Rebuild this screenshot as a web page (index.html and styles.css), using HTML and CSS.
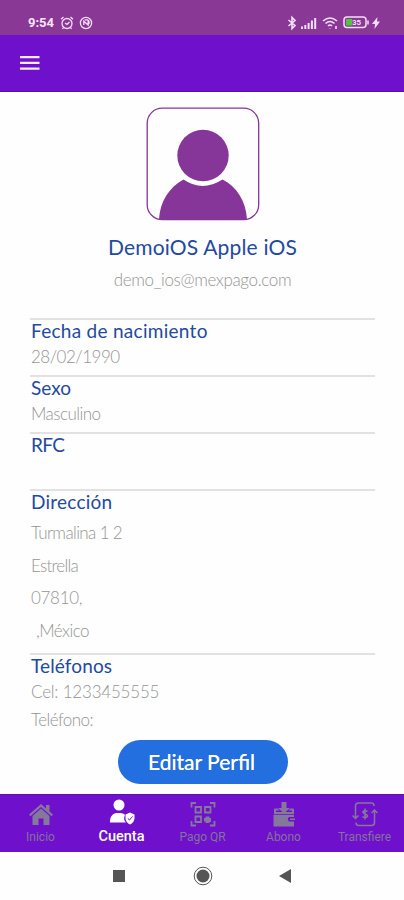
FILE: index.html
```
<!DOCTYPE html>
<html lang="es">
<head>
<meta charset="utf-8">
<title>Cuenta</title>
<link rel="stylesheet" href="styles.css">
</head>
<body>
<div class="phone">
  <header class="status">
    <div class="status-left">
      <span class="clock">9:54</span>
      <svg class="alarm" width="14" height="14" viewBox="0 0 14 14"><circle cx="7" cy="7.5" r="5"/><path d="M1 3.2 3.5 1M13 3.2 10.500 1M3.500 11.500 2.500 13M10.500 11.500 11.500 13M5 7l2 1.500L9.500 6"/></svg>
      <svg class="nfc" width="14" height="14" viewBox="0 0 14 14"><circle cx="7" cy="7" r="5.600"/><path d="M4.800 9V5.200L9.200 9V5M5.500 3.800h3q2 1 1.500 4"/></svg>
    </div>
    <div class="status-right">
      <svg class="line bt" width="10" height="14" viewBox="0 0 10 14"><path d="M1.500 4 8 9.500 5 12.500v-11L8 4.500 1.500 10"/></svg>
      <svg class="fill signal" width="16" height="12" viewBox="0 0 16 12"><path d="M0 9.500h2V12H0zM3.300 8h2v4h-2zM6.600 6h2v6h-2zM9.900 3.500h2V12h-2zM13.200 1h2v11h-2z"/></svg>
      <svg class="line wifi" width="17" height="14" viewBox="0 0 17 14"><path d="M1 5q7-6 14 0M3.500 7.500q4.500-4 9 0M6 10q2-2 4 0M8 12v.5M14 10v3"/></svg>
      <svg class="battery" width="26" height="13" viewBox="0 0 26 13"><rect class="shell" x="1" y="1" width="22" height="10.500" rx="3"/><rect class="charge" x="3" y="3" width="6" height="6.500"/><path class="shell" d="M25 4.500v4"/><text x="9" y="9.300">35</text></svg>
      <svg class="fill" width="8" height="12" viewBox="0 0 8 12"><path d="M5.500 0 0 7h3l-.5 5L8 4.500H5z"/></svg>
    </div>
  </header>
  <div class="appbar">
    <svg width="20" height="14" viewBox="0 0 20 14"><path d="M0 0h19.500v2.300H0zM0 5.700h19.500V8H0zM0 11.400h19.500v2.300H0z"/></svg>
  </div>
  <main>
    <section class="profile">
      <svg class="avatar" width="114" height="114" viewBox="0 0 114 114"><rect x="1.200" y="1.200" width="111.500" height="111.500" rx="15"/><circle cx="57" cy="48.500" r="25.700"/><path d="M13 112.500c1-18 10-32 24.500-40q19 13 39 0C91 80 100 94 101 112.500z"/></svg>
      <h1><span class="t name">DemoiOS Apple iOS</span></h1>
      <p class="mail"><span class="t email">demo_ios@mexpago.com</span></p>
    </section>
    <section class="row"><h2><span class="t h-birth">Fecha de nacimiento</span></h2><p><span class="t v-birth">28/02/1990</span></p></section>
    <section class="row"><h2><span class="t h-sex">Sexo</span></h2><p><span class="t v-sex">Masculino</span></p></section>
    <section class="row"><h2><span class="t h-rfc">RFC</span></h2></section>
    <section class="row address"><h2><span class="t h-dir">Dirección</span></h2><p><span class="t v-street">Turmalina 1 2</span></p><p><span class="t v-area">Estrella</span></p><p><span class="t v-zip">07810,</span></p><p class="country"><span class="t v-country">,México</span></p></section>
    <section class="row phones"><h2><span class="t h-tel">Teléfonos</span></h2><p><span class="t v-cel">Cel: 1233455555</span></p><p><span class="t v-tel">Teléfono:</span></p></section>
    <button class="edit">Editar Perfil</button>
  </main>
  <nav class="tabs">
    <a class="tab"><svg width="26" height="26" viewBox="0 0 26 26"><path class="f" d="M13 3 1 13.500l1.500 1.700L13 6l10.500 9.200 1.500-1.700-3.500-3V4h-3.500v3.500zM4.500 15 13 7.500l8.500 7.500v9H15.500v-6.500h-5V24h-6z"/></svg><span>Inicio</span></a>
    <a class="tab on"><svg width="26" height="26" viewBox="0 0 26 26"><circle class="f" cx="10" cy="6" r="5.500"/><path class="f" d="M1 23.500c0-7 3-9.500 8-9.500 4 0 6 .5 7 2-1.500 3-1 5.500 1 7.500z"/><path class="f" d="m21 13.500 4.500 2v4q-.5 4-4.500 6-4-2-4.500-6v-4z"/><path class="check" d="m18.800 19.500 1.700 1.500 3-3.500"/></svg><span>Cuenta</span></a>
    <a class="tab"><svg width="26" height="26" viewBox="0 0 26 26"><path class="l" d="M6 2H1.500v4.500M20 2h4.500v4.500M1.500 20v4.500H6M24.500 20v4.500H20M5.500 6h5.500v5.500H5.500zM15 6h5.500v5.500H15zM5.500 15.500h5.500V21H5.500z"/><path class="f" d="M15.500 15.500h4v1.500h1.500v4h-1.500v1h-4v-1.500H14v-3.500h1.500z"/></svg><span>Pago QR</span></a>
    <a class="tab"><svg width="26" height="26" viewBox="0 0 26 26"><path class="f" d="M10.500 1h5v6h3.500l-6 5.500L7 7h3.500zM4 7.500h2.500l2 2H5v1.500h16V9.500h-3.500l2-2H22q1 0 1 1V13h-20V8.500q0-1 1-1zM2.500 13.800h20.500V16h-5q-2.500 2 0 4.500h5V25.500H2.500zM19 17.500h5V19h-5z"/></svg><span>Abono</span></a>
    <a class="tab"><svg width="26" height="26" viewBox="0 0 26 26"><path class="l thin" d="M3.500 17V5q0-3 3-3h13q2.500 0 2.500 3M.5 14.500l3 3 3-3M22.500 9.500v12q0 3-3 3h-13q-2.500 0-2.500-3M19.500 12l3-3 3 3M15.500 10.500q-2.500-1.500-4.500 0c-1 3 4.500 2 4.500 4.500-.5 2-3.500 2-5 .5M13 7.500v11"/></svg><span>Transfiere</span></a>
  </nav>
  <footer class="system">
    <svg width="12" height="12" viewBox="0 0 12 12"><path d="M0 0h12v12H0z"/></svg>
    <svg width="20" height="20" viewBox="0 0 20 20"><circle class="ring" cx="10" cy="10" r="8.800"/><circle cx="10" cy="10" r="6.500"/></svg>
    <svg class="back" width="12" height="14" viewBox="0 0 12 14"><path d="M12 0v14L0 7z"/></svg>
  </footer>
</div>
</body>
</html>
```
FILE: styles.css
```
* { box-sizing: border-box; }
body { margin: 0; background: #fefefe; font-family: Lato, sans-serif; }
h1, h2, p { margin: 0; font-weight: 400; }
svg { display: block; flex: none; overflow: visible; }
.phone { width: 404px; height: 900px; display: flex; flex-direction: column; overflow: hidden; }
.status { height: 35px; flex: none; background: #893896; display: flex; justify-content: space-between; padding: 9px 24px 0 28px; color: #f8e7fa; }
.status-left, .status-right { display: flex; align-items: center; height: 27px; }
.clock { font: 700 13px/27px Roboto, sans-serif; width: 32px; }
.alarm, .nfc, .line { fill: none; stroke: #f4dff6; stroke-width: 1.300; }
.nfc { margin-left: 5px; }
.line { stroke-width: 1.600; }
.fill { fill: #f4dff6; }
.signal { margin-left: 4px; }
.wifi { margin-left: 5px; }
.battery { margin: 0 3px 0 4px; }
.shell { fill: none; stroke: #f4dff6; stroke-width: 1.500; }
.charge { fill: #52c43c; }
.battery text { font: 700 8px Roboto, sans-serif; fill: #f4dff6; }
.appbar { height: 57px; flex: none; background: #6e10cc; padding: 21px 0 0 20px; border-bottom: 1px solid #5d0cb8; }
.appbar svg { fill: #f7eaff; }
main { height: 702px; flex: none; display: flex; flex-direction: column; padding: 15px 29px 0 30px; }
.profile { height: 211px; display: flex; flex-direction: column; align-items: center; }
.avatar { fill: #853698; }
.avatar rect { fill: none; stroke: #853698; stroke-width: 1.300; }
h1 { color: #2449a0; font-size: 21px; line-height: 28px; margin-top: 12px; white-space: nowrap; }
.mail { line-height: 24px; margin-top: 7px; }
.t { display: inline-block; white-space: nowrap; }
p { color: #959595; font-size: 17px; font-weight: 300; line-height: 24px; }
h2 { color: #2449a0; font-size: 19px; line-height: 21px; padding-bottom: 4px; }
.row { height: 57px; flex: none; border-top: 2px solid #e2e2e2; }
.row h2, .row p { padding-left: 1px; }
.address { height: 164px; }
.address h2 { margin-bottom: 5px; }
.address p { height: 32.600px; }
.address .country { padding-left: 6px; }
.phones { height: 86px; }
.phones p { height: 28px; }
.name { letter-spacing: .18px; }
.email { letter-spacing: -.36px; }
.h-birth { letter-spacing: .28px; }
.v-birth { letter-spacing: -.5px; }
.v-sex { letter-spacing: -.55px; }
.h-rfc { letter-spacing: -.6px; }
.h-dir { letter-spacing: .22px; }
.v-street { letter-spacing: -.62px; }
.v-area { letter-spacing: -.75px; }
.v-zip { letter-spacing: -.3px; }
.v-country { letter-spacing: -.55px; }
.h-tel { letter-spacing: .12px; }
.v-cel { letter-spacing: -.2px; }
.v-tel { letter-spacing: -.55px; }
.edit { align-self: center; flex: none; width: 170px; height: 44px; margin-top: 1px; border: 0; border-radius: 22px; background: #246fe0; color: #fff; font: 400 21px/44px Lato, sans-serif; padding: 0 2px 0 0; text-shadow: 0 0 .5px #fff; }
.tabs { height: 58px; flex: none; background: #6e10cc; border-top: 1px solid #5d0cb8; display: grid; grid-template-columns: repeat(5, 81px); }
.tab { display: flex; flex-direction: column; align-items: center; padding-top: 6px; color: #82749a; font: 400 12px/18px Roboto, sans-serif; white-space: nowrap; }
.tab span { margin-top: 1px; }
.on { color: #fff; font-size: 14.500px; }
.on svg { margin-top: -2px; }
.on span { margin-top: 3px; font-weight: 500; }
.f { fill: #84799a; }
.l { fill: none; stroke: #84799a; stroke-width: 1.800; }
.thin { stroke-width: 1.500; }
.on .f { fill: #fff; }
.check { fill: none; stroke: #6e10cc; stroke-width: 1; }
.system { height: 48px; flex: none; display: flex; align-items: center; padding-left: 113px; gap: 68px; fill: #555; }
.back { margin-left: -2px; }
.ring { fill: none; stroke: #555; stroke-width: 1; }
```
